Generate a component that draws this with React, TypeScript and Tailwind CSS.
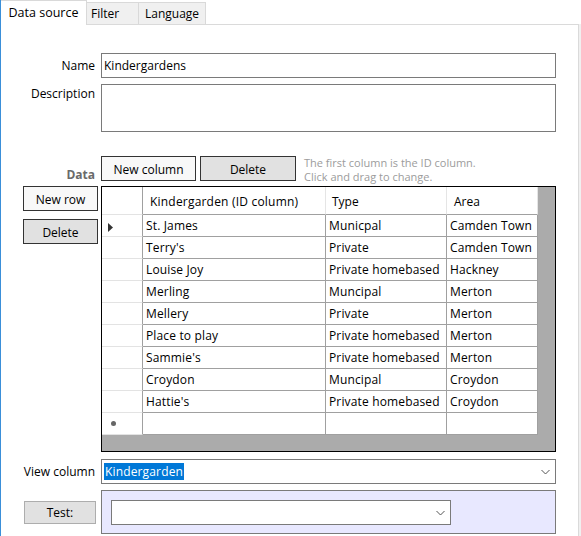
import React from "react";

const rows: [string, string, string][] = [
  ["St. James", "Municpal", "Camden Town"],
  ["Terry's", "Private", "Camden Town"],
  ["Louise Joy", "Private homebased", "Hackney"],
  ["Merling", "Muncipal", "Merton"],
  ["Mellery", "Private", "Merton"],
  ["Place to play", "Private homebased", "Merton"],
  ["Sammie's", "Private homebased", "Merton"],
  ["Croydon", "Muncipal", "Croydon"],
  ["Hattie's", "Private homebased", "Croydon"],
];

function Chevron() {
  return (
    <svg width="9" height="6" viewBox="0 0 9 6" className="shrink-0">
      <path d="M0.5 1 L4.5 5 L8.5 1" fill="none" stroke="#555" strokeWidth="1" />
    </svg>
  );
}

export default function App() {
  return (
    <div className="flex w-[581px] h-[536px] bg-white font-['Open_Sans',sans-serif] text-[12px] leading-[16px] text-black overflow-hidden">
      <div className="w-px h-full bg-[#3a8fd9]" />
      <div className="flex flex-col w-[580px]">
        {/* tabs */}
        <div className="flex items-end h-[24px] bg-white">
          <div className="relative z-10 -mb-px flex h-[25px] w-[86px] items-start justify-center border-t border-r border-[#d9d9d9] bg-white pt-[4px] text-[12.5px]">
            Data source
          </div>
          <div className="flex h-[22px] w-[52px] items-start border-t border-r border-[#d9d9d9] bg-[#f0f0f0] pt-[3px] pl-[4px]">
            Filter
          </div>
          <div className="flex h-[22px] w-[67px] items-start border-t border-r border-[#d9d9d9] bg-[#f0f0f0] pt-[3px] pl-[6px]">
            Language
          </div>
        </div>
        <div className="flex flex-1">
          <div className="flex w-[578px] flex-col border-t border-r border-[#dadada] bg-white">
            {/* Name */}
            <div className="mt-[28px] flex h-[25px] items-center">
              <div className="w-[94px] text-right">Name</div>
              <div className="ml-[6px] flex h-[25px] w-[455px] items-center border border-[#7a7a7a] pl-[2px]">
                Kindergardens
              </div>
            </div>
            {/* Description */}
            <div className="mt-[6px] flex h-[48px] items-start">
              <div className="w-[94px] text-right pt-[2px]">Description</div>
              <div className="ml-[6px] h-[48px] w-[455px] border border-[#7a7a7a]" />
            </div>
            {/* Data buttons */}
            <div className="mt-[24px] flex h-[25px] items-start">
              <div className="w-[94px] pt-[11px] text-right font-bold text-[#6a6a6a]">Data</div>
              <button className="ml-[6px] flex h-[25px] w-[95px] items-center justify-center border border-[#333] bg-[#f8f8f8] pt-[2px]">
                New column
              </button>
              <button className="ml-[4px] flex h-[25px] w-[96px] items-center justify-center border border-[#333] bg-[#e1e1e1] pt-[2px]">
                Delete
              </button>
              <div className="ml-[8px] text-[11px] leading-[14px] text-[#9c9c9c]">
                <div>The first column is the ID column.</div>
                <div>Click and drag to change.</div>
              </div>
            </div>
            {/* grid row */}
            <div className="mt-[5px] flex items-start">
              <div className="ml-[22px] flex w-[75px] flex-col gap-[8px]">
                <button className="flex h-[25px] w-[75px] items-center justify-center border border-[#333] bg-[#f8f8f8] pt-[2px]">
                  New row
                </button>
                <button className="flex h-[25px] w-[75px] items-center justify-center border border-[#333] bg-[#e1e1e1] pt-[2px]">
                  Delete
                </button>
              </div>
              <div className="ml-[3px] flex h-[266px] w-[455px] flex-col border border-black bg-[#ababab]">
                {/* header */}
                <div className="flex h-[28px]">
                  <div className="h-[28px] w-[41px] border-r border-b border-r-[#a0a0a0] border-b-[#e3e3e3] bg-white" />
                  <div className="flex h-[28px] w-[183px] items-center border-r border-b border-r-[#e5e5e5] border-b-[#a0a0a0] bg-white pl-[7px] pt-[3px] tracking-[0.2px]">
                    Kindergarden (ID column)
                  </div>
                  <div className="flex h-[28px] w-[121px] items-center border-r border-b border-r-[#e5e5e5] border-b-[#a0a0a0] bg-white pl-[6px] pt-[3px]">
                    Type
                  </div>
                  <div className="flex h-[28px] w-[91px] items-center border-r border-b border-r-[#e5e5e5] border-b-[#a0a0a0] bg-white pl-[7px] pt-[3px]">
                    Area
                  </div>
                </div>
                {rows.map((r, i) => (
                  <div key={i} className="flex h-[22px]">
                    <div className="flex h-[22px] w-[41px] items-center border-r border-b border-r-[#a0a0a0] border-b-[#e3e3e3] bg-white pl-[6px]">
                      {i === 0 && (
                        <svg width="5" height="9" viewBox="0 0 5 9" className="mt-[3px]">
                          <path d="M0 0 L5 4.5 L0 9 Z" fill="#333" />
                        </svg>
                      )}
                    </div>
                    <div className="flex h-[22px] w-[183px] items-center border-r border-b border-[#a0a0a0] bg-white pl-[3px] pt-px tracking-[0.15px]">
                      {r[0]}
                    </div>
                    <div className="flex h-[22px] w-[121px] items-center border-r border-b border-[#a0a0a0] bg-white pl-[3px] pt-px tracking-[0.15px]">
                      {r[1]}
                    </div>
                    <div className="flex h-[22px] w-[91px] items-center border-r border-b border-[#a0a0a0] bg-white pl-[3px] pt-px tracking-[0.15px]">
                      {r[2]}
                    </div>
                  </div>
                ))}
                <div className="flex h-[22px]">
                  <div className="flex h-[22px] w-[41px] items-center border-r border-b border-r-[#a0a0a0] border-b-[#e3e3e3] bg-white pl-[9px]">
                    <div className="h-[5px] w-[5px] rounded-full bg-[#666]" />
                  </div>
                  <div className="h-[22px] w-[183px] border-r border-b border-[#a0a0a0] bg-white" />
                  <div className="h-[22px] w-[121px] border-r border-b border-[#a0a0a0] bg-white" />
                  <div className="h-[22px] w-[91px] border-r border-b border-[#a0a0a0] bg-white" />
                </div>
              </div>
            </div>
            {/* View column */}
            <div className="mt-[7px] flex h-[25px] items-center">
              <div className="w-[94px] text-right">View column</div>
              <div className="ml-[6px] flex h-[25px] w-[455px] items-center justify-between border border-[#7a7a7a] pl-[2px] pr-[5px]">
                <span className="bg-[#0078d7] px-px leading-[17px] text-white tracking-[0.15px]">Kindergarden</span>
                <Chevron />
              </div>
            </div>
            {/* Test */}
            <div className="mt-[6px] flex items-start">
              <button className="ml-[23px] mt-[11px] flex h-[23px] w-[72px] items-center justify-center border border-[#adadad] bg-[#e1e1e1]">
                Test:
              </button>
              <div className="ml-[5px] h-[44px] w-[455px] border border-[#7a7a7a] bg-[#e8e8ff] pl-[9px] pt-[9px]">
                <div className="flex h-[25px] w-[340px] items-center justify-end border border-[#7a7a7a] bg-white pr-[5px]">
                  <Chevron />
                </div>
              </div>
            </div>
          </div>
          <div className="w-[2px] bg-[#f0f0f0]" />
        </div>
      </div>
    </div>
  );
}
